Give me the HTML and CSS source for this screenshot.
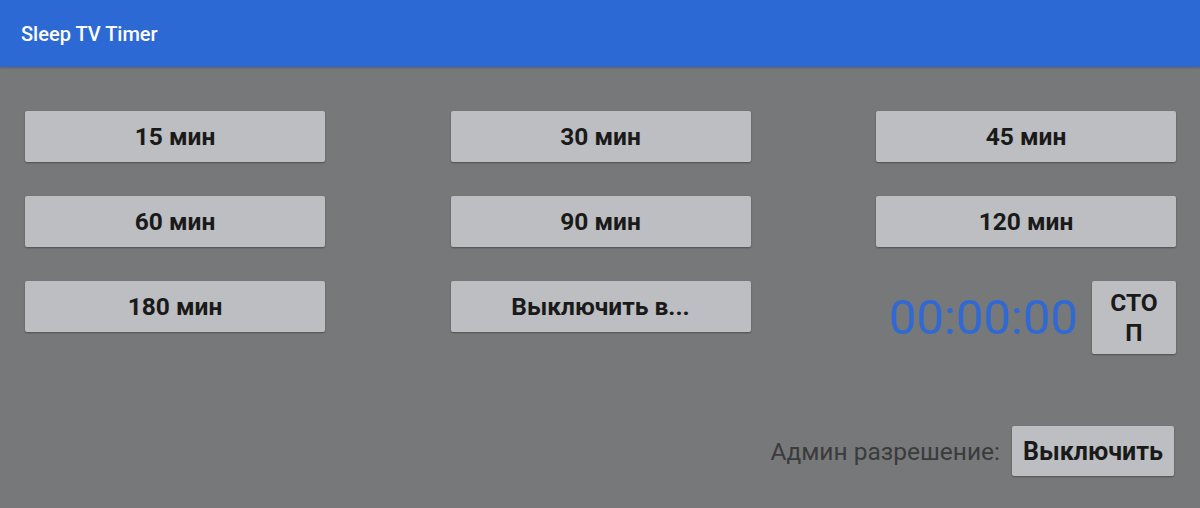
FILE: index.html
```html
<!DOCTYPE html>
<html>
<head>
<meta charset="utf-8">
<link rel="stylesheet" href="styles.css">
</head>
<body>
<header class="appbar"><span class="title">Sleep TV Timer</span></header>
<main class="content">
  <div class="grid">
    <button class="btn">15 мин</button>
    <button class="btn">30 мин</button>
    <button class="btn">45 мин</button>
    <button class="btn">60 мин</button>
    <button class="btn">90 мин</button>
    <button class="btn">120 мин</button>
    <button class="btn">180 мин</button>
    <button class="btn">Выключить в...</button>
    <div class="timer-cell">
      <span class="timer">00:00:00</span>
      <button class="btn stop">СТОП</button>
    </div>
  </div>
  <div class="admin">
    <span class="admin-label">Админ разрешение:</span>
    <button class="btn admin-btn">Выключить</button>
  </div>
</main>
</body>
</html>
```
FILE: styles.css
```css
* { box-sizing: border-box; }
html, body {
  margin: 0;
  height: 100%;
}
body {
  background: #77787a;
  font-family: Roboto, "Noto Sans", sans-serif;
  overflow: hidden;
}
.appbar {
  height: 67px;
  background: #2d69d5;
  display: flex;
  align-items: center;
  padding-left: 21px;
  box-shadow: 0 1px 2px rgba(0,0,0,0.2);
}
.title {
  color: #ffffff;
  font-size: 20px;
  font-weight: 500;
  padding-top: 1px;
}
.content {
  padding: 44px 24px 0 25px;
}
.grid {
  display: grid;
  grid-template-columns: 300px 300px 300px;
  justify-content: space-between;
  row-gap: 34px;
  align-items: start;
}
.btn {
  height: 51px;
  border: none;
  border-radius: 2px;
  background: #bcbec1;
  color: #1a1a1a;
  font-family: Roboto, "Noto Sans", sans-serif;
  font-weight: 700;
  font-size: 24.5px;
  box-shadow: 0 1px 2px rgba(0,0,0,0.35);
  padding: 0;
  margin: 0;
}
.timer-cell {
  display: flex;
  justify-content: flex-end;
  align-items: flex-start;
  gap: 14px;
}
.timer {
  color: #3069d2;
  font-size: 49px;
  font-weight: 400;
  line-height: 73px;
}
.stop {
  width: 84px;
  height: 73px;
  line-height: 30px;
  padding: 0 12px;
  word-break: break-all;
}
.admin {
  display: flex;
  justify-content: flex-end;
  align-items: center;
  gap: 12px;
  margin-top: 72px;
  padding-right: 2px;
}
.admin-label {
  color: #3b3b3c;
  font-size: 24.5px;
}
.admin-btn {
  width: 162px;
  height: 50px;
  font-size: 25px;
}
```
